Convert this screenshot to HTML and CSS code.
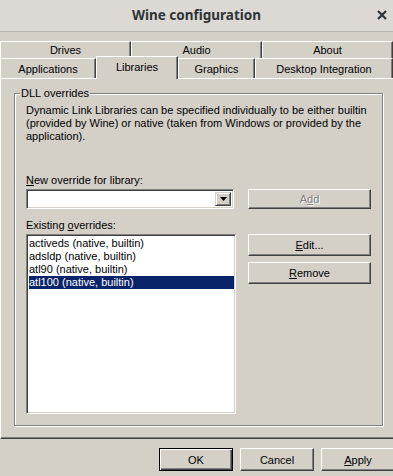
FILE: index.html
```html
<!DOCTYPE html>
<html lang="en">
<head>
    <meta charset="UTF-8">
    <meta name="viewport" content="width=device-width, initial-scale=1.0">
    <title>Wine configuration</title>
    <link rel="stylesheet" href="styles.css">
</head>
<body>

    <!-- Title bar -->
    <header class="titlebar">
        <span></span>
        <h1>Wine configuration</h1>
        <a class="close">
            <svg width="10" height="10" viewBox="0 0 10 10">
                <path d="M1 1 L9 9 M9 1 L1 9" stroke="#2e3436" stroke-width="2.2" fill="none"/>
            </svg>
        </a>
    </header>

    <!-- Tabs -->
    <div class="tabs">
        <div class="tab-row back">
            <div class="tab w-131">Drives</div>
            <div class="tab w-131">Audio</div>
            <div class="tab grow">About</div>
        </div>
        <div class="tab-row front">
            <div class="tab w-96">Applications</div>
            <div class="tab selected w-82">Libraries</div>
            <div class="tab w-77">Graphics</div>
            <div class="tab grow">Desktop Integration</div>
        </div>
    </div>

    <!-- Libraries page -->
    <div class="pane">
        <fieldset class="group">
            <legend>DLL overrides</legend>
            <p class="desc">Dynamic Link Libraries can be specified individually to be either builtin (provided by Wine) or native (taken from Windows or provided by the application).</p>

            <label class="field-label"><u>N</u>ew override for library:</label>
            <div class="row">
                <div class="combo">
                    <span class="combo-input"></span>
                    <span class="combo-btn">
                        <svg width="7" height="4" viewBox="0 0 7 4"><path d="M0 0 H7 L3.5 4 Z" fill="#000"/></svg>
                    </span>
                </div>
                <button class="btn disabled">A<u>d</u>d</button>
            </div>

            <label class="field-label">Existing <u>o</u>verrides:</label>
            <div class="row">
                <ul class="listbox">
                    <li>activeds (native, builtin)</li>
                    <li>adsldp (native, builtin)</li>
                    <li>atl90 (native, builtin)</li>
                    <li class="active">atl100 (native, builtin)</li>
                </ul>
                <div class="side-buttons">
                    <button class="btn"><u>E</u>dit...</button>
                    <button class="btn"><u>R</u>emove</button>
                </div>
            </div>
        </fieldset>
    </div>

    <!-- Dialog buttons -->
    <footer class="dialog-buttons">
        <button class="btn default">OK</button>
        <button class="btn">Cancel</button>
        <button class="btn"><u>A</u>pply</button>
    </footer>

</body>
</html>
```

FILE: styles.css
```css
body {
    margin: 0;
    width: 393px;
    height: 476px;
    overflow: hidden;
    background-color: #d4d0c8;
    font-family: "Liberation Sans", Arial, sans-serif;
    font-size: 11px;
    color: #000;
}

u {
    text-underline-offset: 1px;
}

/* Title bar */
.titlebar {
    display: grid;
    grid-template-columns: 1fr auto 1fr;
    align-items: center;
    height: 30px;
    padding-bottom: 1px;
    background-color: #dcd9d4;
    border-bottom: 1px solid #b8b5b0;
}

.titlebar h1 {
    margin: 0;
    font-family: "Noto Sans", sans-serif;
    font-size: 13.5px;
    font-weight: bold;
    color: #2e3436;
}

.close {
    justify-self: end;
    display: flex;
    padding-right: 6px;
}

/* Tabs */
.tabs {
    margin-top: 9px;
}

.tab-row {
    display: flex;
}

.tab-row.back {
    height: 17px;
}

.tab-row.front {
    height: 20px;
}

.tab {
    box-sizing: border-box;
    display: flex;
    align-items: center;
    justify-content: center;
    border-top: 1px solid #fff;
    border-left: 1px solid #fff;
    border-right: 1px solid #404040;
    box-shadow: inset -1px 0 #808080;
    background-color: #d4d0c8;
}

.tab.selected {
    position: relative;
    z-index: 1;
    margin-top: -2px;
    margin-bottom: -1px;
    padding-bottom: 3px;
}

.w-131 { width: 131px; }
.w-96 { width: 96px; }
.w-82 { width: 82px; }
.w-77 { width: 77px; }
.grow { flex: 1; }

/* Page */
.pane {
    box-sizing: border-box;
    height: 361px;
    border-top: 1px solid #fff;
    border-left: 1px solid #fff;
    border-bottom: 1px solid #404040;
    box-shadow: inset 0 -1px #808080;
    padding: 8px 0 0 13px;
}

.group {
    box-sizing: border-box;
    width: 366px;
    height: 339px;
    margin: 0;
    padding: 4px 11px 0 11px;
    border: 1px solid #808080;
    box-shadow: inset 1px 1px #fff, 1px 1px #fff;
}

.group legend {
    margin-left: -6px;
    padding: 0 1px;
    line-height: 13px;
    background-color: #d4d0c8;
}

.desc {
    margin: 0;
    line-height: 13px;
}

.field-label {
    display: block;
    line-height: 13px;
    margin-top: 31px;
    margin-bottom: 2px;
}

.row + .field-label {
    margin-top: 10px;
}

.row {
    display: grid;
    grid-template-columns: 210px 123px;
    column-gap: 12px;
    align-items: start;
}

/* Combo box */
.combo {
    box-sizing: border-box;
    display: flex;
    width: 208px;
    height: 20px;
    background-color: #fff;
    border: 1px solid;
    border-color: #808080 #fff #fff #808080;
    box-shadow: inset 1px 1px #404040, inset -1px -1px #d4d0c8;
    padding: 2px;
}

.combo-input {
    flex: 1;
}

.combo-btn {
    box-sizing: border-box;
    display: flex;
    align-items: center;
    justify-content: center;
    width: 16px;
    background-color: #d4d0c8;
    border: 1px solid;
    border-color: #d4d0c8 #404040 #404040 #d4d0c8;
    box-shadow: inset 1px 1px #fff, inset -1px -1px #808080;
}

/* Buttons */
.btn {
    box-sizing: border-box;
    height: 22px;
    padding: 0;
    font-family: inherit;
    font-size: 11px;
    color: #000;
    background-color: #d4d0c8;
    border: 1px solid;
    border-color: #fff #404040 #404040 #fff;
    box-shadow: inset -1px -1px #808080;
}

.row .btn {
    height: 20px;
}

.btn.disabled {
    color: #808080;
    text-shadow: 1px 1px #fff;
}

.side-buttons {
    display: flex;
    flex-direction: column;
    gap: 6px;
}

.side-buttons .btn {
    height: 22px;
}

/* List box */
.listbox {
    box-sizing: border-box;
    height: 180px;
    margin: 0;
    padding: 2px 1px 0 2px;
    list-style: none;
    background-color: #fff;
    border: 1px solid;
    border-color: #808080 #fff #fff #808080;
    box-shadow: inset 1px 1px #404040, inset -1px -1px #d4d0c8;
}

.listbox li {
    height: 13px;
    line-height: 13px;
}

.listbox li.active {
    background-color: #0a246a;
    color: #fff;
}

/* Dialog buttons */
.dialog-buttons {
    display: flex;
    justify-content: flex-end;
    gap: 7px;
    margin-right: -2px;
    padding-top: 9px;
}

.dialog-buttons .btn {
    width: 74px;
    height: 23px;
}

.btn.default {
    border-color: #000;
    box-shadow: inset 1px 1px #fff, inset -1px -1px #404040, inset -2px -2px #808080;
}
```
